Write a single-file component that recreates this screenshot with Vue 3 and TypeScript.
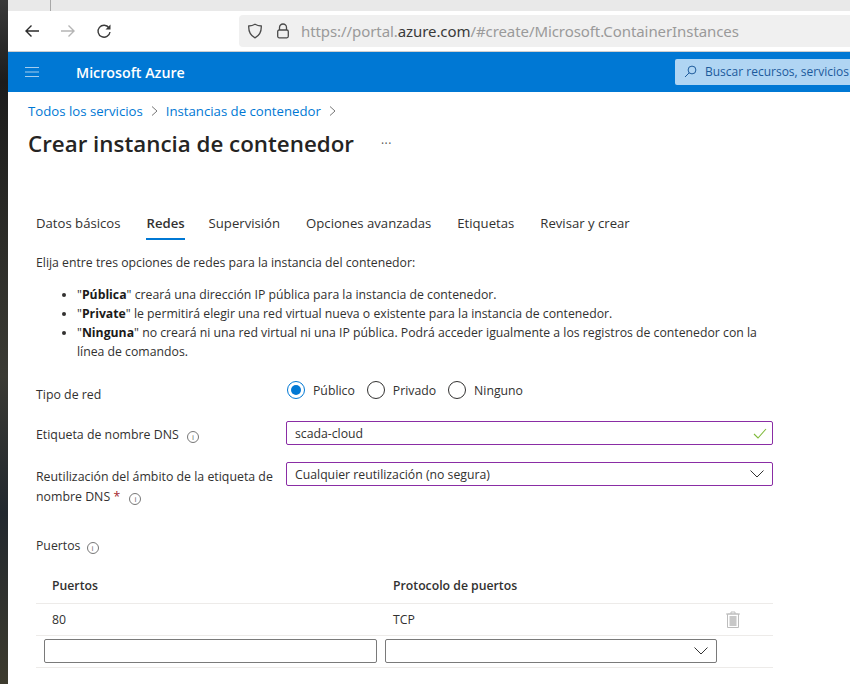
<script setup lang="ts">
const tabs = [
  { label: "Datos básicos", active: false },
  { label: "Redes", active: true },
  { label: "Supervisión", active: false },
  { label: "Opciones avanzadas", active: false },
  { label: "Etiquetas", active: false },
  { label: "Revisar y crear", active: false },
];

const radios = [
  { label: "Público", checked: true },
  { label: "Privado", checked: false },
  { label: "Ninguno", checked: false },
];
</script>

<template>
  <div class="screen">
    <div class="wallpaper" />

    <div class="window">
      <div class="tabstrip"><span class="tab-sep" /></div>

      <div class="toolbar">
        <svg class="nav back" width="16" height="16" viewBox="0 0 16 16">
          <path d="M15 8H2M7.500 2.500 2 8l5.500 5.500" fill="none" stroke="#2b2b2b" stroke-width="1.400" />
        </svg>
        <svg class="nav forward" width="16" height="16" viewBox="0 0 16 16">
          <path d="M1 8h13M8.500 2.500 14 8l-5.500 5.500" fill="none" stroke="#b5b5b5" stroke-width="1.400" />
        </svg>
        <svg class="nav reload" width="16" height="16" viewBox="0 0 16 16">
          <path d="M13 4.800A6 6 0 1 0 14 9" fill="none" stroke="#3a3a3a" stroke-width="1.400" />
          <path d="M14.500 1.500v5h-5z" fill="#3a3a3a" />
        </svg>

        <div class="urlbar">
          <svg class="url-icon" width="16" height="16" viewBox="0 0 16 16">
            <path d="M8 1.200c2 1.200 4 1.700 6.300 1.800.2 5.600-1.800 9.600-6.300 11.800C3.500 12.600 1.500 8.600 1.700 3 4 2.900 6 2.400 8 1.200z" fill="none" stroke="#4a4a4a" stroke-width="1.300" />
          </svg>
          <svg class="url-icon lock" width="14" height="16" viewBox="0 0 14 16">
            <path d="M3.500 7V4.500a3.500 3.500 0 0 1 7 0V7" fill="none" stroke="#4a4a4a" stroke-width="1.300" />
            <rect x="1.700" y="7" width="10.600" height="7.800" rx="1.500" fill="none" stroke="#4a4a4a" stroke-width="1.300" />
          </svg>
          <span class="url">https://portal.<span class="url-host">azure.com</span>/#create/Microsoft.ContainerInstances</span>
        </div>
      </div>

      <header class="topbar">
        <svg class="burger" width="14" height="10" viewBox="0 0 14 10">
          <path d="M0 .5h14M0 5h14M0 9.500h14" stroke="#a5cdee" stroke-width="1.100" />
        </svg>
        <span class="brand">Microsoft Azure</span>
        <div class="search">
          <svg width="13" height="13" viewBox="0 0 13 13">
            <circle cx="8" cy="5" r="3.900" fill="none" stroke="#1f5c9c" />
            <path d="M5.200 7.800 1 12" stroke="#1f5c9c" />
          </svg>
          <span>Buscar recursos, servicios y documentos</span>
        </div>
      </header>

      <main class="page">
        <nav class="crumbs">
          <a>Todos los servicios</a>
          <svg width="7" height="10" viewBox="0 0 7 10"><path d="m1 .5 5 4.500-5 4.500" fill="none" stroke="#777" /></svg>
          <a>Instancias de contenedor</a>
          <svg width="7" height="10" viewBox="0 0 7 10"><path d="m1 .5 5 4.500-5 4.500" fill="none" stroke="#777" /></svg>
        </nav>

        <div class="title-row">
          <h1>Crear instancia de contenedor</h1>
          <span class="more">···</span>
        </div>

        <div class="tabs">
          <span v-for="tab in tabs" :key="tab.label" class="tab" :class="{ active: tab.active }">{{ tab.label }}</span>
        </div>

        <p class="intro">Elija entre tres opciones de redes para la instancia del contenedor:</p>

        <ul class="options">
          <li>"<b>Pública</b>" creará una dirección IP pública para la instancia de contenedor.</li>
          <li>"<b>Private</b>" le permitirá elegir una red virtual nueva o existente para la instancia de contenedor.</li>
          <li>"<b>Ninguna</b>" no creará ni una red virtual ni una IP pública. Podrá acceder igualmente a los registros de contenedor con la línea de comandos.</li>
        </ul>

        <div class="field field-radio">
          <label>Tipo de red</label>
          <div class="radios">
            <span v-for="radio in radios" :key="radio.label" class="radio">
              <span class="dot" :class="{ checked: radio.checked }" />
              {{ radio.label }}
            </span>
          </div>
        </div>

        <div class="field field-dns">
          <label>Etiqueta de nombre DNS <i class="info">i</i></label>
          <div class="box box-check">
            <span>scada-cloud</span>
            <svg width="14" height="11" viewBox="0 0 14 11"><path d="m1 6 4 4 8-9" fill="none" stroke="#7fba3a" stroke-width="1.100" /></svg>
          </div>
        </div>

        <div class="field field-scope">
          <label>Reutilización del ámbito de la etiqueta de nombre DNS <em>*</em> <i class="info">i</i></label>
          <div class="box">
            <span>Cualquier reutilización (no segura)</span>
            <svg width="14" height="8" viewBox="0 0 14 8"><path d="m.5.5 6.500 6.500 6.500-6.500" fill="none" stroke="#333" /></svg>
          </div>
        </div>

        <div class="ports-label">Puertos <i class="info">i</i></div>

        <div class="ports">
          <div class="row head">
            <span class="cell-port">Puertos</span>
            <span>Protocolo de puertos</span>
          </div>
          <div class="row data">
            <span class="cell-port">80</span>
            <span>TCP</span>
            <svg class="trash" width="14" height="17" viewBox="0 0 14 17">
              <path d="M0 3h14M5 3V1h4v2" fill="none" stroke="#bdbdbd" />
              <path d="M1.500 3v13.500h11V3z" fill="none" stroke="#bdbdbd" />
              <rect x="3.500" y="5" width="7" height="10" fill="#c8c8c8" />
            </svg>
          </div>
          <div class="row inputs">
            <div class="input port-input" />
            <div class="input proto-input">
              <svg width="14" height="8" viewBox="0 0 14 8"><path d="m.5.5 6.500 6.500 6.500-6.500" fill="none" stroke="#333" /></svg>
            </div>
          </div>
        </div>
      </main>
    </div>
  </div>
</template>

<style>
html,
body {
  margin: 0;
  overflow: hidden;
}
</style>

<style scoped>
.screen {
  display: flex;
  width: 850px;
  height: 684px;
  overflow: hidden;
  font-family: "Open Sans", "Noto Sans", sans-serif;
  color: #323130;
  background: #fff;
}

.wallpaper {
  flex: 0 0 8px;
  background: linear-gradient(180deg, #3a3a3a 0%, #1c1c1c 12%, #2c2c28 35%, #3a3a34 55%, #22282e 75%, #3d3b2e 100%);
}

.window {
  flex: 1;
  min-width: 0;
  display: flex;
  flex-direction: column;
}

.tabstrip {
  height: 11px;
  padding-left: 42px;
  background: #e9e9e9;
}

.tab-sep {
  display: block;
  width: 1px;
  height: 11px;
  background: #a8a8a8;
}

.toolbar {
  display: flex;
  align-items: center;
  height: 41px;
  border-bottom: 1px solid #cfcfcf;
  background: #fff;
  box-sizing: border-box;
}

.nav {
  flex: none;
}

.back {
  margin-left: 16px;
}

.forward {
  margin-left: 20px;
}

.reload {
  margin-left: 20px;
}

.urlbar {
  flex: 1;
  display: flex;
  align-items: center;
  height: 32px;
  margin: 0 0 0 127px;
  border-radius: 4px 0 0 4px;
  background: #f0f0f0;
  font-family: "Noto Sans", sans-serif;
  font-size: 15px;
  letter-spacing: -0.08px;
  white-space: nowrap;
}

.url-icon {
  flex: none;
  margin-left: 8px;
}

.lock {
  margin-left: 13px;
}

.url {
  margin-left: 11px;
  color: #9a9a9a;
}

.url-host {
  color: #3a3a3a;
}

.topbar {
  display: flex;
  align-items: center;
  height: 40px;
  background: #0078d4;
  color: #fff;
}

.burger {
  margin-left: 17px;
}

.brand {
  margin-left: 37px;
  font-size: 14.25px;
  font-weight: 600;
  font-family: "Open Sans", sans-serif;
}

.search {
  display: flex;
  align-items: center;
  gap: 8px;
  height: 26px;
  margin: -1px 0 0 auto;
  padding-left: 9px;
  width: 175px;
  box-sizing: border-box;
  flex: none;
  overflow: hidden;
  white-space: nowrap;
  border-radius: 2px 0 0 2px;
  background: #b0d5f3;
  color: #1c5a9c;
  font-size: 12px;
}

.search svg {
  flex: none;
}

.page {
  flex: 1;
  padding: 0 0 0 20px;
  font-size: 12.25px;
  position: relative;
}

.crumbs {
  display: flex;
  align-items: center;
  gap: 8px;
  height: 17px;
  margin: 10px 0 0;
  font-size: 13.2px;
  color: #0078d4;
}

.title-row {
  display: flex;
  align-items: center;
  margin-top: 8px;
  height: 32px;
}

h1 {
  margin: 0;
  font-size: 22.35px;
  font-weight: 600;
  color: #252423;
}

.more {
  margin-left: 27px;
  font-size: 12px;
  letter-spacing: 0.5px;
  color: #555;
}

.tabs {
  display: flex;
  gap: 26px;
  margin: 55px 0 0 8px;
  height: 40px;
  font-size: 13.15px;
  line-height: 18px;
}

.tab {
  box-sizing: border-box;
  height: 26px;
  white-space: nowrap;
}

.tab.active {
  margin-right: -2px;
  font-weight: 600;
  border-bottom: 2px solid #0078d4;
}

.intro {
  margin: 0 0 0 8px;
  line-height: 17px;
}

.options {
  margin: 14px 0 0 8px;
  padding: 0 0 0 41px;
  width: 740px;
  box-sizing: border-box;
  line-height: 19px;
}

.options li::marker {
  font-size: 11px;
}

.options b {
  color: #1b1a19;
}

.field {
  display: grid;
  grid-template-columns: 250px 487px;
  margin-left: 8px;
}

.field label {
  font-size: 12.35px;
  line-height: 20px;
}

.field-radio {
  margin-top: 7px;
  height: 53px;
  align-items: center;
}

.radios {
  display: flex;
  gap: 12px;
  margin-top: -9px;
  margin-left: 1px;
}

.radio {
  display: flex;
  align-items: center;
  gap: 8px;
}

.dot {
  position: relative;
  width: 18px;
  height: 18px;
  box-sizing: border-box;
  border: 1px solid #323130;
  border-radius: 50%;
}

.dot.checked {
  border-color: #0078d4;
}

.dot.checked::after {
  content: "";
  position: absolute;
  inset: 3px;
  border-radius: 50%;
  background: #0078d4;
}

.box {
  display: flex;
  align-items: center;
  justify-content: space-between;
  box-sizing: border-box;
  height: 24px;
  padding: 0 8px;
  border: 1px solid #8a2da5;
  border-radius: 2px;
}

.box-check {
  padding-right: 5px;
}

.field-dns {
  height: 41px;
  align-items: start;
}

.field-dns label {
  padding-top: 4px;
}

.field-scope {
  height: 62px;
}

.field-scope label {
  margin-top: 5px;
}

em {
  margin-right: 1px;
  color: #a4262c;
  font-style: normal;
}

.info {
  display: inline-block;
  box-sizing: border-box;
  width: 12px;
  height: 12px;
  margin-left: 5px;
  border: 1px solid #777;
  border-radius: 50%;
  font: 8px/10px "Open Sans", sans-serif;
  text-align: center;
  color: #666;
  vertical-align: -1px;
}

.ports-label {
  margin: 12px 0 0 8px;
  line-height: 20px;
}

.ports-label .info {
  margin-left: 3px;
}

.ports {
  width: 737px;
  margin: 21px 0 0 8px;
}

.row {
  position: relative;
  display: flex;
  box-sizing: border-box;
  align-items: center;
  border-bottom: 1px solid #edebe9;
}

.row.head {
  height: 27px;
  font-weight: 600;
  align-items: flex-start;
}

.row.data {
  height: 32px;
}

.row.inputs {
  height: 32px;
  padding-left: 8px;
  gap: 8px;
}

.cell-port {
  width: 357px;
  padding-left: 16px;
  box-sizing: border-box;
}

.trash {
  position: absolute;
  left: 690px;
  top: 7px;
}

.input {
  box-sizing: border-box;
  height: 24px;
  margin-top: -1px;
  border: 1px solid #7a7a7a;
  border-radius: 2px;
}

.port-input {
  width: 333px;
}

.proto-input {
  display: flex;
  align-items: center;
  justify-content: flex-end;
  width: 332px;
  padding-right: 8px;
}
</style>
